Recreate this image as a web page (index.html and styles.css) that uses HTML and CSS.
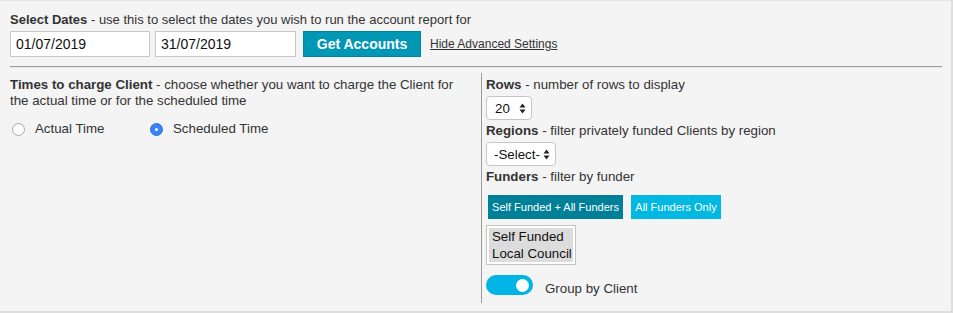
FILE: index.html
```html
<!DOCTYPE html>
<html>
<head>
<meta charset="utf-8">
<link rel="stylesheet" href="styles.css">
</head>
<body>
<div class="panel">
  <div class="title"><b>Select Dates</b> - use this to select the dates you wish to run the account report for</div>
  <div class="date-row">
    <input class="date-input" type="text" value="01/07/2019">
    <input class="date-input wide" type="text" value="31/07/2019">
    <button class="get-btn">Get Accounts</button>
    <a class="adv-link" href="#">Hide Advanced Settings</a>
  </div>
  <div class="rule"></div>
  <div class="columns">
    <div class="col-left">
      <div class="label"><b>Times to charge Client</b> - choose whether you want to charge the Client for the actual time or for the scheduled time</div>
      <div class="radio-row">
        <label class="radio-item first"><span class="radio"></span>Actual Time</label>
        <label class="radio-item"><span class="radio checked"></span>Scheduled Time</label>
      </div>
    </div>
    <div class="col-right">
      <div class="label"><b>Rows</b> - number of rows to display</div>
      <div class="select rows-select"><span class="sel-text">20</span><svg class="arrows" width="7" height="11" viewBox="0 0 7 11"><path d="M3.5 0.5 L6.5 4.5 H0.5 Z M3.5 10.5 L6.5 6.5 H0.5 Z" fill="#222"/></svg></div>
      <div class="label gap-top"><b>Regions</b> - filter privately funded Clients by region</div>
      <div class="select region-select"><span class="sel-text">-Select-</span><svg class="arrows" width="7" height="11" viewBox="0 0 7 11"><path d="M3.5 0.5 L6.5 4.5 H0.5 Z M3.5 10.5 L6.5 6.5 H0.5 Z" fill="#222"/></svg></div>
      <div class="label gap-top"><b>Funders</b> - filter by funder</div>
      <div class="fund-btns">
        <button class="fund-btn dark">Self Funded + All Funders</button>
        <button class="fund-btn light">All Funders Only</button>
      </div>
      <div class="listbox">
        <div class="opt">Self Funded</div>
        <div class="opt">Local Council</div>
      </div>
      <div class="toggle-row">
        <span class="toggle"><span class="knob"></span></span>
        <span class="toggle-label">Group by Client</span>
      </div>
    </div>
  </div>
</div>
</body>
</html>
```
FILE: styles.css
```css
html, body {
  margin: 0;
  padding: 0;
  background: #ffffff;
}
body {
  font-family: "Liberation Sans", Arial, sans-serif;
  color: #333;
}
.panel {
  width: 953px;
  height: 313px;
  box-sizing: border-box;
  background: #f4f4f4;
  border-top: 1px solid #e4e4e4;
  border-right: 2px solid #dedede;
  border-bottom: 2px solid #dedede;
  padding: 10px 10px 0 10px;
}
.title {
  font-size: 13px;
  line-height: 17px;
}
.title b, .label b {
  font-weight: bold;
}
.date-row {
  display: flex;
  align-items: center;
  margin-top: 3px;
  height: 26px;
}
.date-input {
  box-sizing: border-box;
  width: 140px;
  height: 26px;
  border: 1px solid #c8c8c8;
  background: #fff;
  font-family: "Liberation Sans", Arial, sans-serif;
  font-size: 14px;
  color: #111;
  padding: 0 0 0 5px;
  margin: 0 5px 0 0;
  outline: none;
}
.date-input.wide {
  width: 141px;
  margin-right: 7px;
}
.get-btn {
  box-sizing: border-box;
  width: 118px;
  height: 26px;
  background: #0097b4;
  border: 1px solid #0086a0;
  color: #fff;
  font-family: "Liberation Sans", Arial, sans-serif;
  font-weight: bold;
  font-size: 14px;
  padding: 0;
  margin: 0;
}
.adv-link {
  margin-left: 9px;
  font-size: 12px;
  color: #333;
  text-decoration: underline;
}
.rule {
  margin-top: 9px;
  width: 932px;
  border-top: 1px solid #9a9a9a;
  border-bottom: 1px solid #e8e8e8;
}
.columns {
  display: flex;
  margin-top: 5px;
}
.col-left {
  width: 471px;
  padding-top: 4px;
  box-sizing: border-box;
  padding-right: 12px;
}
.col-right {
  border-left: 1px solid #9a9a9a;
  padding: 4px 0 8px 4px;
  width: 450px;
}
.label {
  font-size: 13.3px;
  line-height: 16px;
}
.gap-top {
  margin-top: 3px;
}
.radio-row {
  display: flex;
  margin-top: 12px;
}
.radio-item {
  display: flex;
  align-items: center;
  font-size: 13.3px;
  line-height: 16px;
}
.radio-item.first {
  width: 138px;
}
.radio {
  box-sizing: border-box;
  width: 13px;
  height: 13px;
  border-radius: 50%;
  border: 1px solid #a8a8a8;
  background: #fff;
  margin: 0 10px 0 2px;
  display: inline-block;
}
.radio.checked {
  background: #3a82f7;
  border-color: #2f6fd8;
  position: relative;
}
.radio.checked::after {
  content: "";
  position: absolute;
  left: 4px;
  top: 4px;
  width: 3px;
  height: 3px;
  border-radius: 50%;
  background: #fff;
}
.select {
  box-sizing: border-box;
  display: flex;
  align-items: center;
  justify-content: space-between;
  height: 24px;
  margin-top: 3px;
  background: #fff;
  border: 1px solid #c6c6c6;
  border-radius: 4px;
  font-size: 13.3px;
  color: #111;
  padding: 0 5px 0 8px;
}
.rows-select {
  width: 46px;
}
.region-select {
  width: 70px;
  padding-left: 7px;
}
.arrows {
  display: block;
}
.fund-btns {
  display: flex;
  margin-top: 10px;
  padding-left: 2px;
}
.fund-btn {
  height: 24px;
  border: none;
  color: #fff;
  font-family: "Liberation Sans", Arial, sans-serif;
  font-size: 11px;
  white-space: nowrap;
  padding: 0;
  margin: 0 8px 0 0;
}
.fund-btn.dark {
  width: 135px;
  background: #007f99;
}
.fund-btn.light {
  width: 90px;
  background: #00b8e2;
}
.listbox {
  box-sizing: border-box;
  width: 90px;
  margin-top: 6px;
  border: 1px solid #c4c4c4;
  background: #fff;
  padding: 2px 2px 2px 2px;
}
.opt {
  background: #dcdcdc;
  font-size: 13.3px;
  line-height: 17px;
  color: #111;
  padding-left: 3px;
}
.toggle-row {
  display: flex;
  align-items: center;
  margin-top: 10px;
}
.toggle {
  box-sizing: border-box;
  width: 47px;
  height: 20px;
  border-radius: 10px;
  background: #00b5e6;
  display: flex;
  justify-content: flex-end;
  align-items: center;
  padding-right: 4px;
}
.knob {
  width: 13px;
  height: 13px;
  border-radius: 50%;
  background: #fff;
}
.toggle-label {
  font-size: 13.3px;
  margin-left: 12px;
  position: relative;
  top: 3px;
}
```
